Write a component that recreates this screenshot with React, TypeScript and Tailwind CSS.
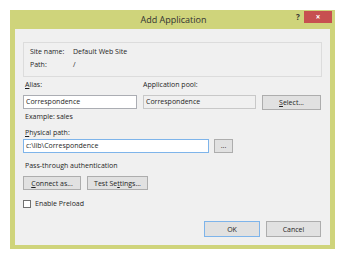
import React from "react";

const font = { fontFamily: '"Open Sans", "Noto Sans", sans-serif' };

function Btn({ children, className = "" }: { children: React.ReactNode; className?: string }) {
  return (
    <div
      className={
        "flex items-center justify-center border border-[#adadad] bg-[#e1e1e1] text-[7px] leading-none text-[#1e1e1e] " +
        className
      }
    >
      {children}
    </div>
  );
}

export default function App() {
  return (
    <div className="w-[346px] h-[260px] bg-white pl-[10px] pt-[10px]" style={font}>
      <div className="w-[325px] h-[239px] bg-[#cfd47b] flex flex-col px-[5px] pb-[4px]">
        {/* title bar */}
        <div className="h-[19px] flex items-start">
          <div className="w-[40px]" />
          <div className="flex-1 flex items-center justify-center h-[19px] text-[9px] text-[#333]">
            Add Application
          </div>
          <div className="w-[40px] flex items-start justify-end pt-[1px] -mr-[2px]">
            <div className="w-[12px] h-[12px] flex items-center justify-center text-[8px] font-bold text-[#333]">?</div>
            <div className="w-[28px] h-[12px] bg-[#c75050] flex items-center justify-center text-white text-[8px] font-bold leading-none">
              ×
            </div>
          </div>
        </div>
        {/* content */}
        <div className="flex-1 bg-[#f0f0f0] flex flex-col px-[8px] pt-[13px] pb-[8px] text-[7px] leading-[10px] text-[#1e1e1e]">
          <div className="h-[35px] border border-[#dcdcdc] pl-[6px] pt-[4px] flex flex-col gap-[3px]">
            <div className="flex">
              <span className="w-[43px]">Site name:</span>
              <span>Default Web Site</span>
            </div>
            <div className="flex">
              <span className="w-[43px]">Path:</span>
              <span>/</span>
            </div>
          </div>

          <div className="flex mt-[3px] gap-[6px] items-start">
            <div className="w-[114px] flex flex-col">
              <span className="pl-[2px]"><span className="underline">A</span>lias:</span>
              <div className="mt-[5px] h-[14px] border border-[#abadb3] bg-white flex items-center pl-[2px]">Correspondence</div>
              <span className="pl-[2px] mt-[3px]">Example: sales</span>
            </div>
            <div className="w-[113px] flex flex-col">
              <span>Application pool:</span>
              <div className="mt-[5px] h-[14px] border border-[#c8c8c8] bg-[#f0f0f0] flex items-center pl-[2px]">Correspondence</div>
            </div>
            <Btn className="mt-[15px] w-[59px] h-[15px]">
              <span><span className="underline">S</span>elect...</span>
            </Btn>
          </div>

          <span className="pl-[2px] mt-[6px]"><span className="underline">P</span>hysical path:</span>
          <div className="flex mt-[1px] gap-[5px] items-center">
            <div className="w-[186px] h-[14px] border border-[#7eb4ea] bg-white flex items-center pl-[2px]">c:\lib\Correspondence</div>
            <Btn className="w-[19px] h-[14px]"><span className="-mt-[2px]">...</span></Btn>
          </div>

          <span className="pl-[2px] mt-[8px]">Pass-through authentication</span>
          <div className="flex mt-[5px] gap-[6px]">
            <Btn className="w-[58px] h-[14px]"><span><span className="underline">C</span>onnect as...</span></Btn>
            <Btn className="w-[61px] h-[14px]"><span>Test Se<span className="underline">t</span>tings...</span></Btn>
          </div>

          <div className="flex items-center mt-[9px] gap-[4px]">
            <div className="w-[8px] h-[8px] border border-[#707070] bg-white" />
            <span>Enable Preload</span>
          </div>

          <div className="mt-auto flex justify-end gap-[6px] pr-[1px]">
            <Btn className="w-[56px] h-[16px] !border-[#7eb4ea]">OK</Btn>
            <Btn className="w-[55px] h-[16px]">Cancel</Btn>
          </div>
        </div>
      </div>
    </div>
  );
}
